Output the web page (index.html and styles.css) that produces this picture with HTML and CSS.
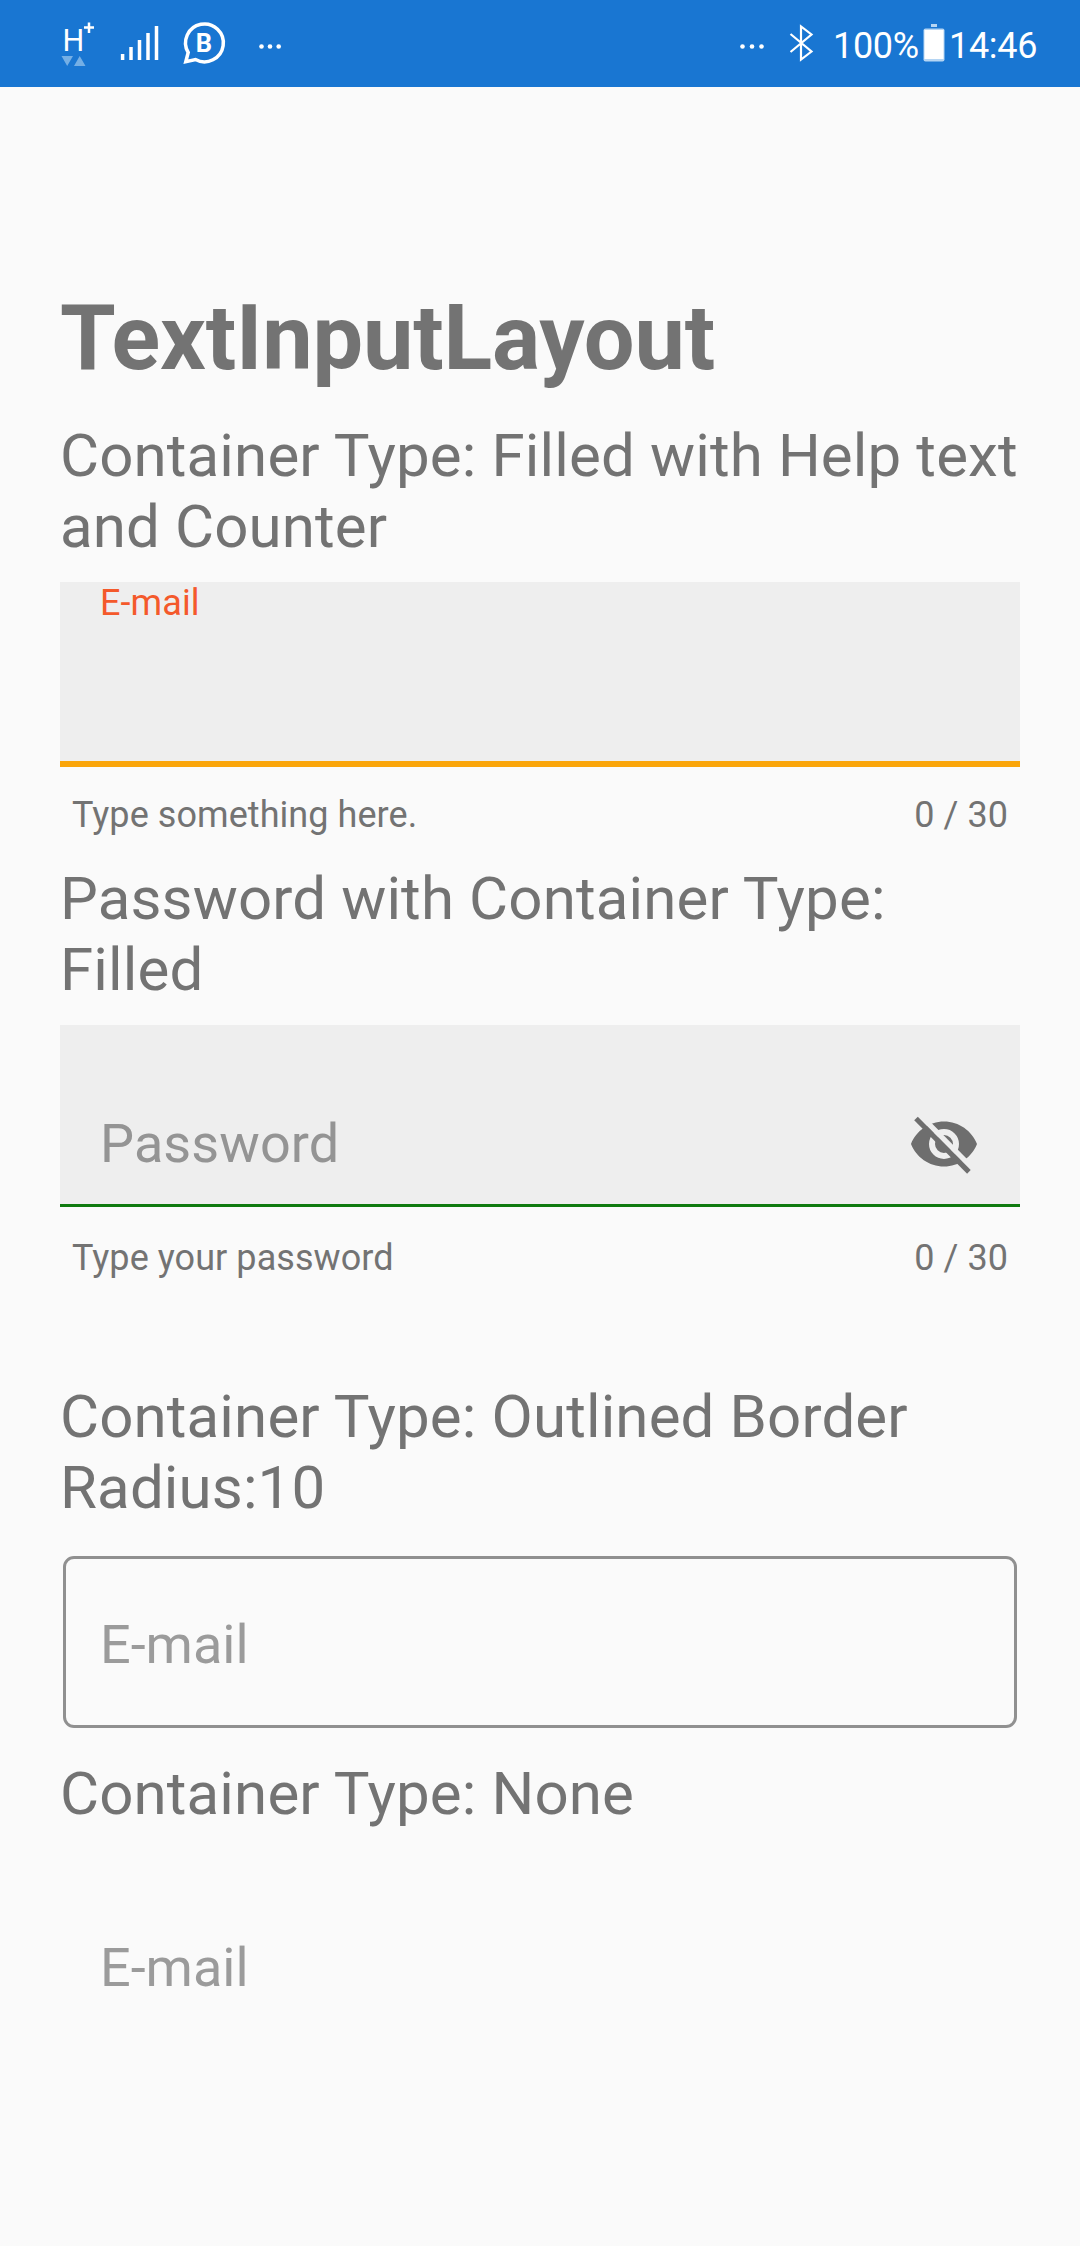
FILE: index.html
```html
<!DOCTYPE html>
<html lang="en">
<head>
<meta charset="utf-8">
<title>TextInputLayout</title>
<link rel="stylesheet" href="styles.css">
</head>
<body>
<header class="status">
  <svg class="status-icons" width="300" height="87" viewBox="0 0 300 87" fill="none" stroke="#fff">
    <text class="network" x="62.500" y="50.900">H</text>
    <path d="M89 22.500V33M84 27.500H94" stroke-width="2.500"/>
    <path d="M61.500 56H73L67.200 66zM74 66H85.500L79.700 56z" fill="#75afe5" stroke="none"/>
    <path d="M122.600 54V60M131 47V60M139.500 40V60M148 33V60M156.500 26V60" stroke-width="3.500"/>
    <path d="M188.200 52.500A18.900 18.900 0 1 1 195.500 59.500L185.800 61.700Z" stroke-width="3.500"/>
    <text class="badge" x="195.800" y="52.300">B</text>
    <g fill="#fff" stroke="none"><circle cx="261.500" cy="46.500" r="2.300"/><circle cx="270" cy="46.500" r="2.300"/><circle cx="278.700" cy="46.500" r="2.300"/></g>
  </svg>
  <div class="status-right">
    <svg width="90" height="87" viewBox="734 0 90 87" fill="none" stroke="#fff">
      <g fill="#fff" stroke="none"><circle cx="742.500" cy="46.500" r="2.300"/><circle cx="752" cy="46.500" r="2.300"/><circle cx="761.500" cy="46.500" r="2.300"/></g>
      <path d="M790.500 34L811.500 51.500L801 59.500V26.500L811.500 34.500L790.500 52" stroke-width="2.200"/>
    </svg>
    <span class="percent">100%</span>
    <svg class="battery" width="22" height="87" viewBox="0 0 22 87"><path d="M8 24h6v3H8z" fill="#b5d5f3"/><rect x=".5" y="28.500" width="21" height="33" rx="2" fill="#b5d5f3"/><path d="M1.500 30h19v29h-19z" fill="#fff"/></svg>
    <span class="time">14:46</span>
  </div>
</header>
<main class="page">
  <h1 class="title">TextInputLayout</h1>
  <section class="group">
    <h2 class="heading">Container Type: Filled with Help text and Counter</h2>
    <div class="field field-focused"><span class="label">E-mail</span></div>
    <div class="help"><span>Type something here.</span><span>0 / 30</span></div>
  </section>
  <section class="group">
    <h2 class="heading">Password with Container Type: Filled</h2>
    <div class="field field-password">
      <span class="hint">Password</span>
      <svg class="eye" width="72" height="72" viewBox="0 0 24 24">
        <path d="M12 4.500C7 4.500 2.730 7.610 1 12c1.730 4.390 6 7.500 11 7.500s9.270-3.110 11-7.500c-1.730-4.390-6-7.500-11-7.500zM12 17a5 5 0 1 1 0-10 5 5 0 0 1 0 10zm0-8a3 3 0 1 0 0 6 3 3 0 0 0 0-6z" fill="#6e6e6e" fill-rule="evenodd"/>
        <path d="M3.900 2.300L21.500 20.100" stroke="#eee" stroke-width="1.800"/>
        <path d="M2.670 3.500L20.300 21.300" stroke="#6e6e6e" stroke-width="1.700"/>
      </svg>
    </div>
    <div class="help help-password"><span>Type your password</span><span>0 / 30</span></div>
  </section>
  <section class="group group-outlined">
    <h2 class="heading">Container Type: Outlined Border Radius:10</h2>
    <div class="outlined"><span class="hint">E-mail</span></div>
  </section>
  <section class="group">
    <h2 class="heading">Container Type: None</h2>
    <div class="plain"><span class="hint">E-mail</span></div>
  </section>
</main>
</body>
</html>
```

FILE: styles.css
```css
* { box-sizing: border-box; }
body { margin: 0; min-height: 2246px; background: #fafafa; color: #737373; font-family: Roboto, sans-serif; }
svg { display: block; flex: none; }
.status { height: 87px; background: #1976d2; display: flex; justify-content: space-between; color: #fff; font-size: 36px; line-height: 87px; }
.network { font-size: 30.500px; font-weight: 400; fill: #fff; stroke: none; }
.badge { font-size: 25.500px; font-weight: 700; fill: #fff; stroke: none; }
.status-right { display: flex; padding-right: 42px; letter-spacing: -.3px; }
.percent { width: 90px; margin-left: 9px; padding-top: 3px; white-space: nowrap; }
.time { width: 89px; margin-left: 4px; padding-top: 3px; white-space: nowrap; }
.page { padding: 199px 60px 0; }
.title { margin: 0; font-size: 90px; line-height: 106px; font-weight: 700; height: 134px; letter-spacing: -.15px; }
.heading { margin: 0; font-size: 60px; line-height: 71px; font-weight: 400; letter-spacing: .14px; }
.group { height: 443px; }
.field { margin-top: 20px; height: 185px; background: #eee; padding: 0 40px; display: flex; }
.field-focused { border-bottom: 6px solid #faa50a; }
.label { color: #f4592b; font-size: 36px; line-height: 42px; letter-spacing: .1px; }
.field-password { height: 182px; border-bottom: 3px solid #0f7a0f; align-items: flex-end; justify-content: space-between; }
.field-password .hint { margin-bottom: 28px; color: #949494; letter-spacing: .1px; }
.eye { margin-bottom: 24px; }
.hint { color: #9b9b9b; font-size: 54px; line-height: 64px; }
.help { display: flex; justify-content: space-between; padding: 27px 12px 0; font-size: 36px; line-height: 42px; letter-spacing: .06px; }
.help-password { padding-top: 30px; }
.group-outlined { padding-top: 75px; height: 452px; }
.outlined { margin: 33px 3px 0; height: 172px; border: 3px solid #909090; border-radius: 11px; padding: 6px 34px 0; display: flex; align-items: center; }
.plain { padding: 107px 40px 0; display: flex; }
```
